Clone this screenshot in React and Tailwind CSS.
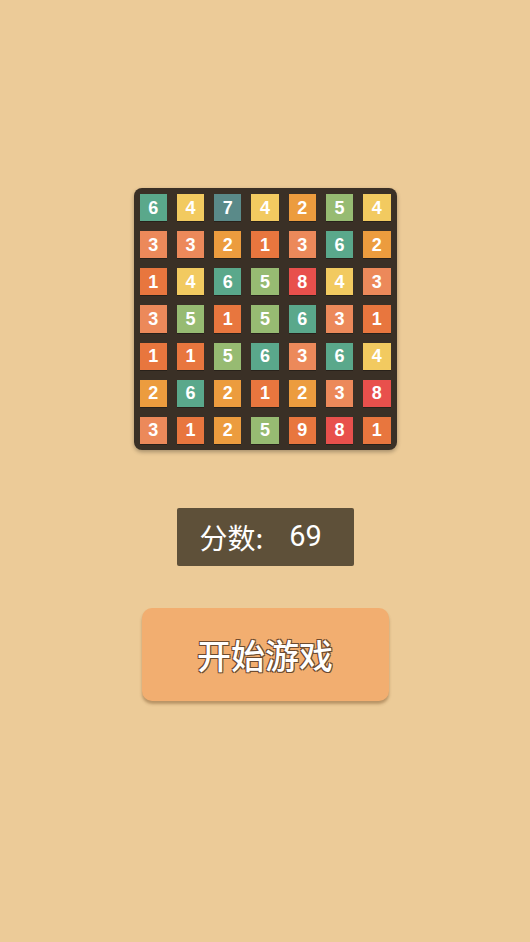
const BOARD = [
  [6, 4, 7, 4, 2, 5, 4],
  [3, 3, 2, 1, 3, 6, 2],
  [1, 4, 6, 5, 8, 4, 3],
  [3, 5, 1, 5, 6, 3, 1],
  [1, 1, 5, 6, 3, 6, 4],
  [2, 6, 2, 1, 2, 3, 8],
  [3, 1, 2, 5, 9, 8, 1],
];

const TILE = {
  1: 'bg-[#e8763e]',
  2: 'bg-[#ec9c3e]',
  3: 'bg-[#ec895a]',
  4: 'bg-[#f2ca60]',
  5: 'bg-[#97bb72]',
  6: 'bg-[#5aa88b]',
  7: 'bg-[#5a8a89]',
  8: 'bg-[#e8504c]',
  9: 'bg-[#e8763e]',
};

export default function App() {
  return (
    <div className="min-h-[942px] w-full bg-[#eccb98] flex flex-col items-center pt-[188px] font-['Liberation_Sans','Noto_Sans_CJK_SC',sans-serif]">
      <div className="w-[263px] h-[262px] p-[6px] rounded-[8px] bg-[#3a3026] shadow-[0_2px_4px_rgba(0,0,0,0.3)] grid grid-cols-7 grid-rows-7 gap-[10px]">
        {BOARD.flat().map((n, i) => (
          <div
            key={i}
            className={`${TILE[n]} flex items-center justify-center text-white text-[18px] font-bold leading-none shadow-[0_1px_0_rgba(0,0,0,0.3)]`}
          >
            {n}
          </div>
        ))}
      </div>

      <div className="mt-[58px] w-[177px] h-[58px] rounded-[2px] bg-[#5e5039] flex items-center pl-[23px] text-white text-[28px] whitespace-pre font-['Noto_Sans_CJK_SC',sans-serif]">
        <span>分数:</span>
        <span className="ml-[26px] text-[29px] font-['Roboto','Liberation_Sans',sans-serif]">69</span>
      </div>

      <button
        type="button"
        className="mt-[42px] w-[247px] h-[93px] rounded-[10px] bg-[#f2ae70] shadow-[0_3px_3px_rgba(120,80,40,0.45)] flex items-center justify-center text-white text-[34px] font-medium font-['Noto_Sans_CJK_SC',sans-serif] [text-shadow:-1px_-1px_0_#6b4a2f,1px_-1px_0_#6b4a2f,-1px_1px_0_#6b4a2f,1px_1px_0_#6b4a2f]"
      >
        开始游戏
      </button>
    </div>
  );
}
